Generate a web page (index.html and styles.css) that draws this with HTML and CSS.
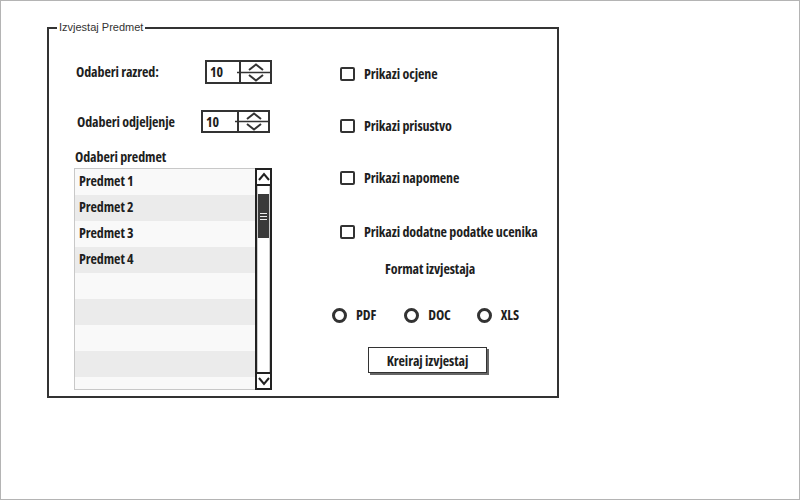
FILE: index.html
```html
<!DOCTYPE html>
<html>
<head>
<meta charset="utf-8">
<link rel="stylesheet" href="styles.css">
</head>
<body>
<div class="page">
  <div class="frame">
    <span class="legend">Izvjestaj Predmet</span>
    <div class="left">
      <div class="row row-razred">
        <span class="label lbl-razred">Odaberi razred:</span>
        <div class="spinner spin-razred">
          <span class="spin-value">10</span>
          <div class="spin-btns">
            <svg width="29" height="20" viewBox="0 0 29 20"><path d="M-4 10.5H31" stroke="#333" stroke-width="1.5" fill="none"/><path d="M8 8L15 2.5L22 8" stroke="#333" stroke-width="2" fill="none"/><path d="M8 13L15 18.5L22 13" stroke="#333" stroke-width="2" fill="none"/></svg>
          </div>
        </div>
      </div>
      <div class="row row-odjel">
        <span class="label lbl-odjel">Odaberi odjeljenje</span>
        <div class="spinner spin-odjel">
          <span class="spin-value">10</span>
          <div class="spin-btns">
            <svg width="29" height="19" viewBox="0 0 29 19"><path d="M-4 9.5H31" stroke="#333" stroke-width="1.5" fill="none"/><path d="M8 7L15 1.5L22 7" stroke="#333" stroke-width="2" fill="none"/><path d="M8 12L15 17.5L22 12" stroke="#333" stroke-width="2" fill="none"/></svg>
          </div>
        </div>
      </div>
      <div class="label lbl-predmet">Odaberi predmet</div>
      <div class="list">
        <div class="items">
          <div class="item">Predmet 1</div>
          <div class="item">Predmet 2</div>
          <div class="item">Predmet 3</div>
          <div class="item">Predmet 4</div>
          <div class="item"></div>
          <div class="item"></div>
          <div class="item"></div>
          <div class="item"></div>
          <div class="item"></div>
        </div>
        <div class="scrollbar">
          <div class="sb-btn sb-up">
            <svg width="12" height="12" viewBox="0 0 12 12"><path d="M1 9L6 3L11 9" stroke="#222" stroke-width="2" fill="none"/></svg>
          </div>
          <div class="sb-track">
            <div class="sb-thumb"><span></span><span></span><span></span></div>
          </div>
          <div class="sb-btn sb-down">
            <svg width="12" height="12" viewBox="0 0 12 12"><path d="M1 3L6 9L11 3" stroke="#222" stroke-width="2" fill="none"/></svg>
          </div>
        </div>
      </div>
    </div>
    <div class="right">
      <div class="check"><span class="box"></span><span class="label">Prikazi ocjene</span></div>
      <div class="check"><span class="box"></span><span class="label">Prikazi prisustvo</span></div>
      <div class="check"><span class="box"></span><span class="label">Prikazi napomene</span></div>
      <div class="check check-last"><span class="box"></span><span class="label">Prikazi dodatne podatke ucenika</span></div>
      <div class="label format-title">Format izvjestaja</div>
      <div class="radios">
        <div class="radio"><span class="circle"></span><span class="label">PDF</span></div>
        <div class="radio radio-doc"><span class="circle"></span><span class="label">DOC</span></div>
        <div class="radio radio-xls"><span class="circle"></span><span class="label">XLS</span></div>
      </div>
      <div class="button">Kreiraj izvjestaj</div>
    </div>
  </div>
</div>
</body>
</html>
```

FILE: styles.css
```css
html, body {
  margin: 0;
  padding: 0;
  background: #fff;
}
.page {
  width: 800px;
  height: 500px;
  box-sizing: border-box;
  border: 1px solid #b4b4b4;
  background: #fff;
  overflow: hidden;
}
.frame {
  position: relative;
  margin: 26px 0 0 46px;
  width: 508px;
  height: 367px;
  border: 2px solid #333;
  display: grid;
  grid-template-columns: 223px 1fr;
}
.legend {
  position: absolute;
  left: 8px;
  top: -8px;
  padding: 0 2px;
  background: #fff;
  font-family: "Liberation Sans", Arial, sans-serif;
  font-size: 11px;
  line-height: 13px;
  color: #333;
}
.label,
.spin-value,
.item,
.button {
  font-family: "Open Sans", Roboto, sans-serif;
  font-stretch: 75%;
  font-size: 14px;
  font-weight: bold;
  letter-spacing: -0.1px;
  color: #1e1e1e;
}
.label {
  line-height: 16px;
  white-space: nowrap;
}
.left {
  padding-top: 31px;
}
.row {
  display: flex;
  align-items: center;
}
.lbl-razred {
  margin-left: 27px;
  width: 129px;
}
.lbl-odjel {
  margin-left: 28px;
  width: 124px;
}
.row-odjel {
  margin-top: 26px;
}
.spinner {
  box-sizing: border-box;
  border: 2px solid #333;
  display: flex;
  background: #fff;
}
.spin-razred {
  width: 67px;
  height: 24px;
}
.spin-odjel {
  width: 69px;
  height: 23px;
}
.spin-value {
  flex: 1;
  border-right: 2px solid #333;
  line-height: 20px;
  padding-left: 3px;
}
.spin-odjel .spin-value {
  line-height: 19px;
}
.spin-btns {
  width: 29px;
  display: flex;
}
.spin-btns svg {
  overflow: visible;
}
.lbl-predmet {
  margin: 16px 0 0 26px;
}
.list {
  margin: 3px 0 0 25px;
  width: 198px;
  height: 222px;
  display: flex;
}
.items {
  flex: 1;
  box-sizing: border-box;
  border: 1px solid #c8c8c8;
  border-right: none;
  overflow: hidden;
}
.item {
  height: 26px;
  box-sizing: border-box;
  padding-left: 4px;
  line-height: 24px;
  background: #f9f9f9;
}
.item:nth-child(even) {
  background: #ebebeb;
}
.scrollbar {
  width: 17px;
  box-sizing: border-box;
  border: 2px solid #222;
  display: flex;
  flex-direction: column;
  background: #fff;
}
.sb-btn {
  height: 14px;
  display: flex;
  align-items: center;
  justify-content: center;
}
.sb-up {
  border-bottom: 2px solid #222;
}
.sb-down {
  border-top: 2px solid #222;
}
.sb-track {
  flex: 1;
  border-left: 1px solid #ccc;
  border-right: 1px solid #ccc;
  padding-top: 8px;
}
.sb-thumb {
  height: 44px;
  background: #3a3a3a;
  display: flex;
  flex-direction: column;
  justify-content: center;
  align-items: center;
  gap: 2px;
}
.sb-thumb span {
  display: block;
  width: 7px;
  height: 1px;
  background: #eee;
}
.right {
  padding: 35px 0 0 60px;
}
.check {
  display: flex;
  align-items: center;
  height: 20px;
  margin: 0 0 32px 8px;
}
.check-last {
  margin-top: 34px;
  margin-bottom: 0;
}
.box {
  width: 15px;
  height: 14px;
  box-sizing: border-box;
  border: 2px solid #333;
  border-radius: 2px;
  margin-right: 9px;
}
.format-title {
  margin: 17px 0 0 53px;
  line-height: 20px;
}
.radios {
  display: flex;
  align-items: center;
  height: 20px;
  margin-top: 26px;
}
.radio {
  display: flex;
  align-items: center;
}
.radio-doc {
  margin-left: 28px;
}
.radio-xls {
  margin-left: 26px;
}
.circle {
  width: 15px;
  height: 15px;
  box-sizing: border-box;
  border: 3px solid #333;
  border-radius: 50%;
  margin-right: 9px;
}
.button {
  margin: 22px 0 0 36px;
  width: 119px;
  height: 26px;
  box-sizing: border-box;
  border: 1px solid #333;
  box-shadow: 2px 2px 0 #666;
  display: flex;
  align-items: center;
  justify-content: center;
}
```
